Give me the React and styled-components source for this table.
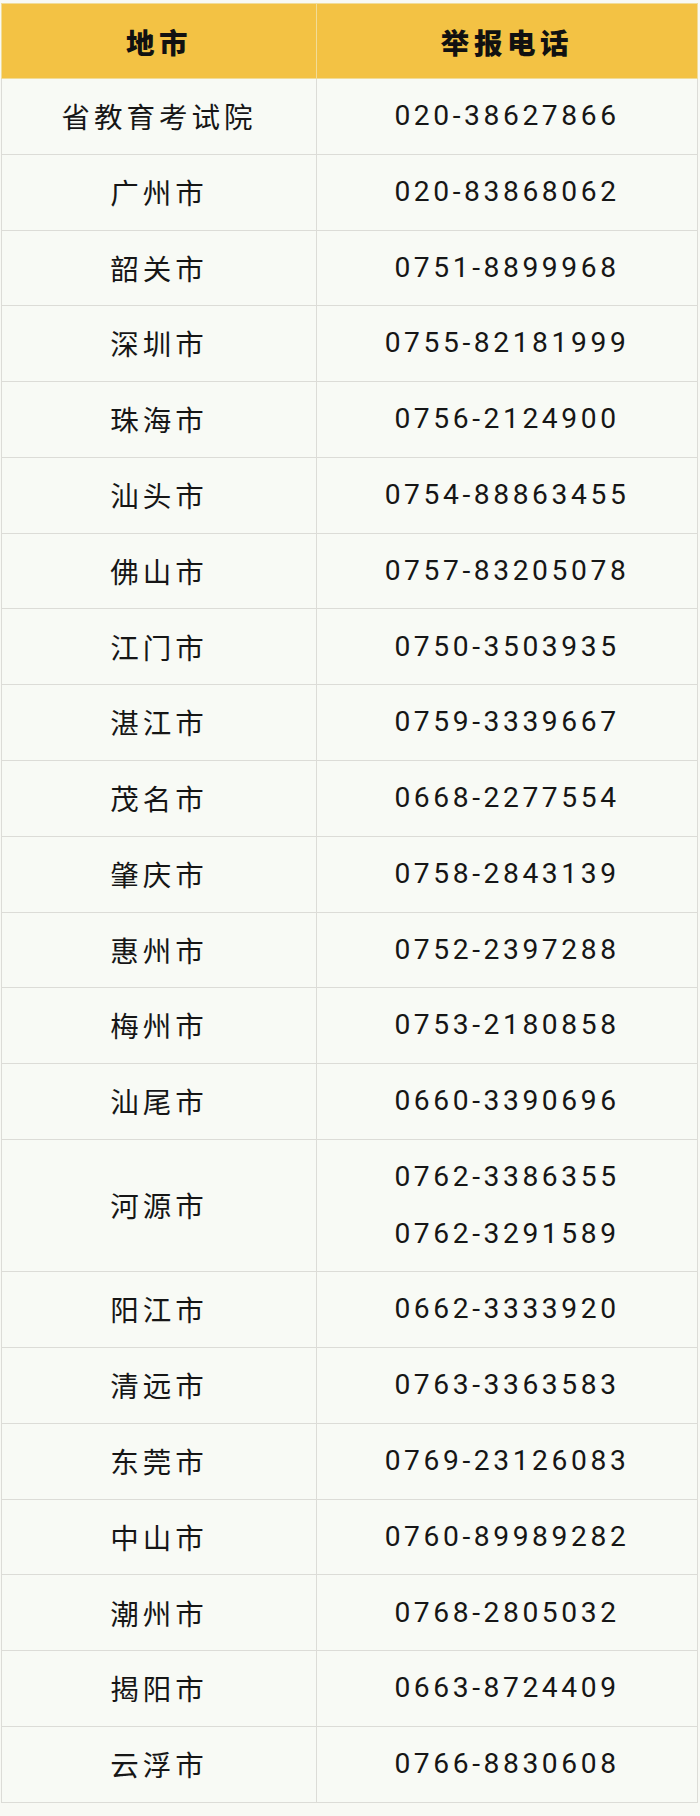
import React from 'react'
import styled, { createGlobalStyle } from 'styled-components'

const GlobalStyle = createGlobalStyle`
  body {
    margin: 0;
    background: #f8f9f4;
    font-family: Roboto, "Noto Sans CJK SC", sans-serif;
  }
`

const Page = styled.div`
  padding: 3px 2px 14px 1px;
`

const Table = styled.table`
  width: 100%;
  border-collapse: collapse;
  table-layout: fixed;
`

const HeadCell = styled.th`
  height: 74px;
  background: #f3c244;
  border: 1px solid #f1dc98;
  color: #111;
  font-family: "Noto Sans CJK SC", sans-serif;
  font-weight: 900;
  font-size: 28.5px;
  letter-spacing: 4.6px;
  text-align: center;
  vertical-align: middle;
  padding: 0;
  width: ${p => p.$w || 'auto'};
`

const Cell = styled.td`
  background: #f8faf5;
  border: 1px solid #dcdcd7;
  color: #161616;
  font-family: ${p => (p.$phone ? 'Roboto, sans-serif' : '"Noto Sans CJK SC", sans-serif')};
  font-size: ${p => (p.$phone ? '28.2px' : '28.5px')};
  letter-spacing: ${p => (p.$phone ? '3.6px' : '4px')};
  line-height: 56.6px;
  padding: 9.1px 0;
  text-align: center;
  vertical-align: middle;
`

const Line = styled.div`
  line-height: 56.6px;
`

const rows = [
  ['省教育考试院', ['020-38627866']],
  ['广州市', ['020-83868062']],
  ['韶关市', ['0751-8899968']],
  ['深圳市', ['0755-82181999']],
  ['珠海市', ['0756-2124900']],
  ['汕头市', ['0754-88863455']],
  ['佛山市', ['0757-83205078']],
  ['江门市', ['0750-3503935']],
  ['湛江市', ['0759-3339667']],
  ['茂名市', ['0668-2277554']],
  ['肇庆市', ['0758-2843139']],
  ['惠州市', ['0752-2397288']],
  ['梅州市', ['0753-2180858']],
  ['汕尾市', ['0660-3390696']],
  ['河源市', ['0762-3386355', '0762-3291589']],
  ['阳江市', ['0662-3333920']],
  ['清远市', ['0763-3363583']],
  ['东莞市', ['0769-23126083']],
  ['中山市', ['0760-89989282']],
  ['潮州市', ['0768-2805032']],
  ['揭阳市', ['0663-8724409']],
  ['云浮市', ['0766-8830608']],
]

export default function App() {
  return (
    <Page>
      <GlobalStyle />
      <Table>
        <thead>
          <tr>
            <HeadCell $w="314px">地市</HeadCell>
            <HeadCell>举报电话</HeadCell>
          </tr>
        </thead>
        <tbody>
          {rows.map(([city, phones]) => (
            <tr key={city}>
              <Cell>{city}</Cell>
              <Cell $phone>
                {phones.map(p => <Line key={p}>{p}</Line>)}
              </Cell>
            </tr>
          ))}
        </tbody>
      </Table>
    </Page>
  )
}
